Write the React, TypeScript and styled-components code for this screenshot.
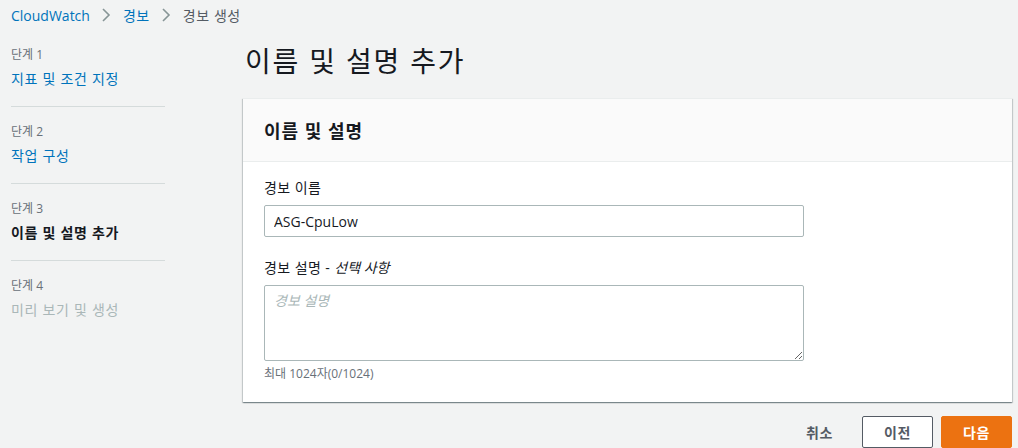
import React from 'react';
import styled, { createGlobalStyle } from 'styled-components';

const font = `"Open Sans", "Noto Sans CJK KR", "Noto Sans", sans-serif`;

const GlobalStyle = createGlobalStyle`
  html, body {
    margin: 0;
    padding: 0;
    background: #f2f3f3;
    font-family: ${font};
    color: #16191f;
    overflow: hidden;
  }
  * { box-sizing: border-box; }
`;

interface Step {
  label: string;
  title: string;
  state: 'done' | 'current' | 'pending';
}

const steps: Step[] = [
  { label: '단계 1', title: '지표 및 조건 지정', state: 'done' },
  { label: '단계 2', title: '작업 구성', state: 'done' },
  { label: '단계 3', title: '이름 및 설명 추가', state: 'current' },
  { label: '단계 4', title: '미리 보기 및 생성', state: 'pending' }
];

const Chevron = () => (
  <svg width='10' height='14' viewBox='0 0 10 14'>
    <path d='M2 1l6 6-6 6' fill='none' stroke='#879596' strokeWidth='1.6' />
  </svg>
);

const App: React.FC = () => (
  <Page>
    <GlobalStyle />
    <Breadcrumbs>
      <Crumb>CloudWatch</Crumb>
      <Chevron />
      <Crumb ko>경보</Crumb>
      <Chevron />
      <Crumb ko current>경보 생성</Crumb>
    </Breadcrumbs>
    <Layout>
      <Sidebar>
        {steps.map((s, i) => (
          <StepItem key={s.label} last={i === steps.length - 1}>
            <StepLabel>{s.label}</StepLabel>
            <StepTitle state={s.state}>{s.title}</StepTitle>
          </StepItem>
        ))}
      </Sidebar>
      <Main>
        <PageTitle>이름 및 설명 추가</PageTitle>
        <Panel>
          <PanelHeader>이름 및 설명</PanelHeader>
          <PanelBody>
            <Field>
              <Label>경보 이름</Label>
              <Input defaultValue='ASG-CpuLow' />
            </Field>
            <Field>
              <Label>
                경보 설명 - <em>선택 사항</em>
              </Label>
              <TextArea placeholder='경보 설명' />
              <Hint>최대 1024자(0/1024)</Hint>
            </Field>
          </PanelBody>
        </Panel>
        <Actions>
          <LinkButton>취소</LinkButton>
          <Button>이전</Button>
          <Button primary>다음</Button>
        </Actions>
      </Main>
    </Layout>
  </Page>
);

export default App;

const Page = styled.div`
  width: 1018px;
  height: 448px;
  padding: 4px 6px 0 11px;
`;

const Breadcrumbs = styled.nav`
  display: flex;
  align-items: center;
  gap: 11px;
  height: 22px;
  font-size: 14px;
`;

const Crumb = styled.span<{ current?: boolean; ko?: boolean }>`
  color: ${p => (p.current ? '#545b64' : '#0073bb')};
  letter-spacing: ${p => (p.ko ? '0.04em' : '0')};
  margin-left: ${p => (p.ko ? '1px' : '0')};
`;

const Layout = styled.div`
  display: grid;
  grid-template-columns: 154px 1fr;
  column-gap: 78px;
  margin-top: 21px;
`;

const Sidebar = styled.ol`
  list-style: none;
  margin: 0;
  padding: 0;
`;

const StepItem = styled.li<{ last?: boolean }>`
  padding-bottom: 17px;
  margin-bottom: 17px;
  border-bottom: ${p => (p.last ? 'none' : '1px solid #d5dbdb')};
`;

const StepLabel = styled.div`
  font-size: 12px;
  line-height: 16px;
  color: #687078;
`;

const StepTitle = styled.div<{ state: Step['state'] }>`
  margin-top: 6px;
  font-size: 14px;
  line-height: 20px;
  letter-spacing: 0.05em;
  color: ${p =>
    p.state === 'done' ? '#0073bb' : p.state === 'current' ? '#16191f' : '#aab7b8'};
  font-weight: ${p => (p.state === 'current' ? 700 : 400)};
`;

const Main = styled.div`
  display: flex;
  flex-direction: column;
`;

const PageTitle = styled.h1`
  margin: -6px 0 0 2px;
  font-size: 28px;
  font-weight: 400;
  line-height: 40px;
  letter-spacing: 0.065em;
  color: #16191f;
`;

const Panel = styled.section`
  margin-top: 17px;
  background: #fff;
  border-top: 1px solid #eaeded;
  box-shadow: 0 1px 1px 0 rgba(0, 28, 36, 0.3), 1px 1px 1px 0 rgba(0, 28, 36, 0.15),
    -1px 1px 1px 0 rgba(0, 28, 36, 0.15);
`;

const PanelHeader = styled.h2`
  margin: 0;
  height: 63px;
  padding: 0 21px;
  display: flex;
  align-items: center;
  background: #fafafa;
  border-bottom: 1px solid #eaeded;
  font-size: 18px;
  font-weight: 700;
  letter-spacing: 0.055em;
`;

const PanelBody = styled.div`
  padding: 15px 20px 20px 21px;
  display: flex;
  flex-direction: column;
  gap: 20px;
`;

const Field = styled.div`
  display: flex;
  flex-direction: column;
`;

const Label = styled.label`
  font-size: 14px;
  line-height: 22px;
  margin-bottom: 6px;
  color: #16191f;
  letter-spacing: 0.03em;

  em {
    font-style: italic;
    letter-spacing: 0;
  }
`;

const Input = styled.input`
  width: 540px;
  height: 32px;
  padding: 0 9px;
  border: 1px solid #aab7b8;
  border-radius: 2px;
  font-family: ${font};
  font-size: 14px;
  color: #16191f;
  outline: none;
`;

const TextArea = styled.textarea`
  width: 540px;
  height: 76px;
  padding: 4px 9px;
  border: 1px solid #aab7b8;
  border-radius: 2px;
  font-family: ${font};
  font-size: 14px;
  outline: none;

  &::placeholder {
    color: #aab7b8;
    font-style: italic;
  }
`;

const Hint = styled.div`
  margin-top: 5px;
  font-size: 12px;
  line-height: 16px;
  color: #687078;
`;

const Actions = styled.div`
  display: flex;
  justify-content: flex-end;
  align-items: center;
  gap: 8px;
  margin-top: 14px;
`;

const LinkButton = styled.button`
  background: none;
  border: none;
  padding: 0 21px 0 20px;
  font-family: ${font};
  font-size: 14px;
  font-weight: 700;
  letter-spacing: 0.04em;
  color: #545b64;
`;

const Button = styled.button<{ primary?: boolean }>`
  width: 71px;
  height: 32px;
  border-radius: 2px;
  border: 1px solid ${p => (p.primary ? '#ec7211' : '#545b64')};
  background: ${p => (p.primary ? '#ec7211' : '#fff')};
  color: ${p => (p.primary ? '#fff' : '#545b64')};
  font-family: ${font};
  font-size: 14px;
  font-weight: 700;
  letter-spacing: 0.04em;
`;
